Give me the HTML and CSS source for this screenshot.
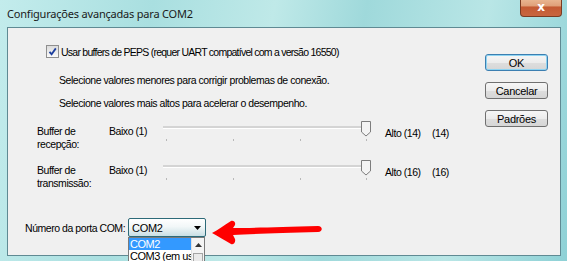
FILE: index.html
```html
<!DOCTYPE html>
<html lang="pt">
<head>
<meta charset="utf-8">
<title>Configurações avançadas para COM2</title>
<link rel="stylesheet" href="styles.css">
</head>
<body>
<div class="window">
  <div class="titlebar">
    <span class="title">Configurações avançadas para COM2</span>
    <div class="close"><span>x</span></div>
  </div>
  <div class="client">
    <div class="main">
      <div class="check-row">
        <span class="checkbox">
          <svg width="11" height="11" viewBox="0 0 11 11"><path d="M2.5 5.8 L4.6 8.2 L8.8 2.4" fill="none" stroke="#1d3f9e" stroke-width="1.8"/></svg>
        </span>
        <span class="label">Usar buffers de PEPS (requer UART compatível com a versão 16550)</span>
      </div>
      <p class="hint hint1">Selecione valores menores para corrigir problemas de conexão.</p>
      <p class="hint hint2">Selecione valores mais altos para acelerar o desempenho.</p>

      <div class="slider-row row1">
        <div class="slabel">Buffer de<br>recepção:</div>
        <div class="low">Baixo (1)</div>
        <svg class="slider" width="212" height="24" viewBox="0 0 212 24">
          <rect x="1" y="6" width="208" height="2" fill="#d4d4d4"/>
          <rect x="1" y="8" width="208" height="1" fill="#ffffff"/>
          <rect x="4" y="19" width="1" height="2" fill="#b8b8b8"/>
          <rect x="71" y="19" width="1" height="2" fill="#b8b8b8"/>
          <rect x="138" y="19" width="1" height="2" fill="#b8b8b8"/>
          <rect x="204" y="19" width="1" height="2" fill="#b8b8b8"/>
          <path d="M199.5 1.5 H208.5 V12 L204 16 L199.5 12 Z" fill="#f4f4f4" stroke="#7d7d7d"/>
        </svg>
        <div class="high">Alto (14)</div>
        <div class="val">(14)</div>
      </div>

      <div class="slider-row row2">
        <div class="slabel">Buffer de<br>transmissão:</div>
        <div class="low">Baixo (1)</div>
        <svg class="slider" width="212" height="24" viewBox="0 0 212 24">
          <rect x="1" y="6" width="208" height="2" fill="#d4d4d4"/>
          <rect x="1" y="8" width="208" height="1" fill="#ffffff"/>
          <rect x="4" y="19" width="1" height="2" fill="#b8b8b8"/>
          <rect x="71" y="19" width="1" height="2" fill="#b8b8b8"/>
          <rect x="138" y="19" width="1" height="2" fill="#b8b8b8"/>
          <rect x="204" y="19" width="1" height="2" fill="#b8b8b8"/>
          <path d="M199.5 1.5 H208.5 V12 L204 16 L199.5 12 Z" fill="#f4f4f4" stroke="#7d7d7d"/>
        </svg>
        <div class="high">Alto (16)</div>
        <div class="val">(16)</div>
      </div>

      <div class="com-row">
        <span class="com-label">Número da porta COM:</span>
        <div class="combo-wrap">
          <div class="combo">
            <span>COM2</span>
            <svg width="7" height="4" viewBox="0 0 7 4"><path d="M0 0 H7 L3.5 4 Z" fill="#000"/></svg>
          </div>
          <div class="dropdown">
            <div class="items">
              <div class="item selected">COM2</div>
              <div class="item">COM3 (em uso)</div>
            </div>
            <div class="scrollbar">
              <svg width="7" height="4" viewBox="0 0 7 4"><path d="M0 4 H7 L3.5 0 Z" fill="#333"/></svg>
              <div class="sthumb"></div>
            </div>
          </div>
        </div>
        <svg class="red-arrow" width="118" height="26" viewBox="0 0 118 26">
          <path d="M2 13 C8 10 14 5 21 1 C23 0 26 2 25 5 L23 8 C42 8 70 7 108 6 C113 6 113 12 108 12 C70 13 42 14 23 15 L25 19 C26 23 23 25 21 24 C14 20 8 16 2 13 Z" fill="#ff0000"/>
        </svg>
      </div>
    </div>
    <div class="buttons">
      <button class="btn default">OK</button>
      <button class="btn">Cancelar</button>
      <button class="btn">Padrões</button>
    </div>
  </div>
</div>
</body>
</html>
```
FILE: styles.css
```css
html, body {
  margin: 0;
  padding: 0;
}
body {
  width: 567px;
  height: 261px;
  overflow: hidden;
  font-family: "Liberation Sans", Arial, sans-serif;
  font-size: 10.5px;
  color: #000;
}
.window {
  position: relative;
  width: 567px;
  height: 261px;
  background: linear-gradient(100deg, #c3ecec 0%, #a9dfe0 25%, #bfe9e8 45%, #9fd9db 60%, #b9e6e6 80%, #8ed1d6 100%);
  box-sizing: border-box;
  padding: 0 6px 0 7px;
}
.titlebar {
  height: 27px;
  display: flex;
  align-items: center;
}
.title {
  font-family: "Noto Sans", "Liberation Sans", sans-serif;
  font-size: 11px;
  color: #1a1a1a;
  letter-spacing: -0.2px;
  margin-top: -1px;
}
.close {
  position: absolute;
  top: 0;
  right: 5px;
  width: 42px;
  height: 17px;
  border: 1px solid #7a3b22;
  border-top: none;
  border-radius: 0 0 4px 4px;
  box-sizing: border-box;
  background: linear-gradient(#e8b48f 0%, #e0a17a 35%, #c45a32 45%, #c86640 100%);
  display: flex;
  justify-content: center;
  align-items: center;
}
.close span {
  color: #fff;
  font-family: "DejaVu Sans", sans-serif;
  font-weight: bold;
  font-size: 12px;
  line-height: 12px;
  margin-top: -2px;
}
.client {
  display: flex;
  height: 229px;
  background: #f0f0f0;
  border: 1px solid #5f8a93;
  box-sizing: border-box;
}
.main {
  flex: 1;
  position: relative;
}
.check-row {
  display: flex;
  align-items: center;
  margin: 17px 0 0 38px;
  height: 13px;
}
.checkbox {
  width: 11px;
  height: 11px;
  border: 1px solid #8f8f8f;
  background: linear-gradient(#dcdcdc, #fafafa);
  display: flex;
  box-sizing: content-box;
  margin-right: 2px;
}
.label, .hint, .slabel, .low, .high, .val, .com-label {
  letter-spacing: -0.45px;
  white-space: nowrap;
}
.check-row .label {
  letter-spacing: -0.75px;
}
.hint {
  margin: 0 0 0 51px;
  line-height: 13px;
}
.hint1 { margin-top: 16px; }
.hint2 { margin-top: 10px; }

.slider-row {
  display: grid;
  grid-template-columns: 72px 54px 222px 47px auto;
  margin-left: 29px;
  line-height: 13px;
}
.row1 { margin-top: 15px; }
.row2 { margin-top: 13px; }
.slider {
  margin-top: -5px;
  margin-left: -1px;
}
.high { margin-top: 2px; }
.val { margin-top: 2px; }

.com-row {
  display: flex;
  align-items: center;
  margin: 28px 0 0 17px;
  position: relative;
}
.com-label {
  width: 103px;
}
.combo-wrap {
  position: relative;
}
.combo {
  width: 78px;
  height: 19px;
  box-sizing: border-box;
  border: 1px solid #2d6a78;
  border-radius: 2px;
  background: linear-gradient(#ffffff 0%, #f2f7f8 45%, #c9dfe4 100%);
  display: flex;
  align-items: center;
  justify-content: space-between;
  padding: 0 4px 0 3px;
  font-size: 11px;
  letter-spacing: -0.3px;
}
.dropdown {
  position: absolute;
  top: 19px;
  left: 0;
  width: 77px;
  height: 30px;
  background: #fff;
  border: 1px solid #7a7a7a;
  border-bottom: none;
  box-sizing: border-box;
  display: flex;
}
.items {
  flex: 1;
  font-size: 11px;
  letter-spacing: -0.5px;
  white-space: nowrap;
  overflow: hidden;
}
.item {
  height: 12px;
  line-height: 12px;
  padding-left: 1px;
}
.item.selected {
  background: #3399ff;
  color: #fff;
}
.scrollbar {
  width: 13px;
  background: #f4f4f4;
  border-left: 1px solid #e0e0e0;
  display: flex;
  flex-direction: column;
  align-items: center;
  padding-top: 5px;
  box-sizing: border-box;
}
.sthumb {
  margin-top: 6px;
  width: 10px;
  flex: 1;
  border: 1px solid #a5a5a5;
  border-bottom: none;
  background: #eaeaea;
  box-sizing: border-box;
}
.red-arrow {
  position: absolute;
  left: 185px;
  top: 2px;
}
.buttons {
  width: 63px;
  margin: 26px 12px 0 0;
  display: flex;
  flex-direction: column;
  gap: 11px;
}
.btn {
  height: 17px;
  width: 63px;
  margin: 0;
  padding: 0;
  border: 1px solid #707070;
  border-radius: 3px;
  background: linear-gradient(#f6f6f6 0%, #ececec 50%, #dedede 51%, #d6d6d6 100%);
  font-family: "Liberation Sans", Arial, sans-serif;
  font-size: 11px;
  letter-spacing: -0.3px;
  color: #000;
}
.btn.default {
  border-color: #3c7fb1;
  box-shadow: inset 0 0 0 1px #8fd4f2;
}
```
